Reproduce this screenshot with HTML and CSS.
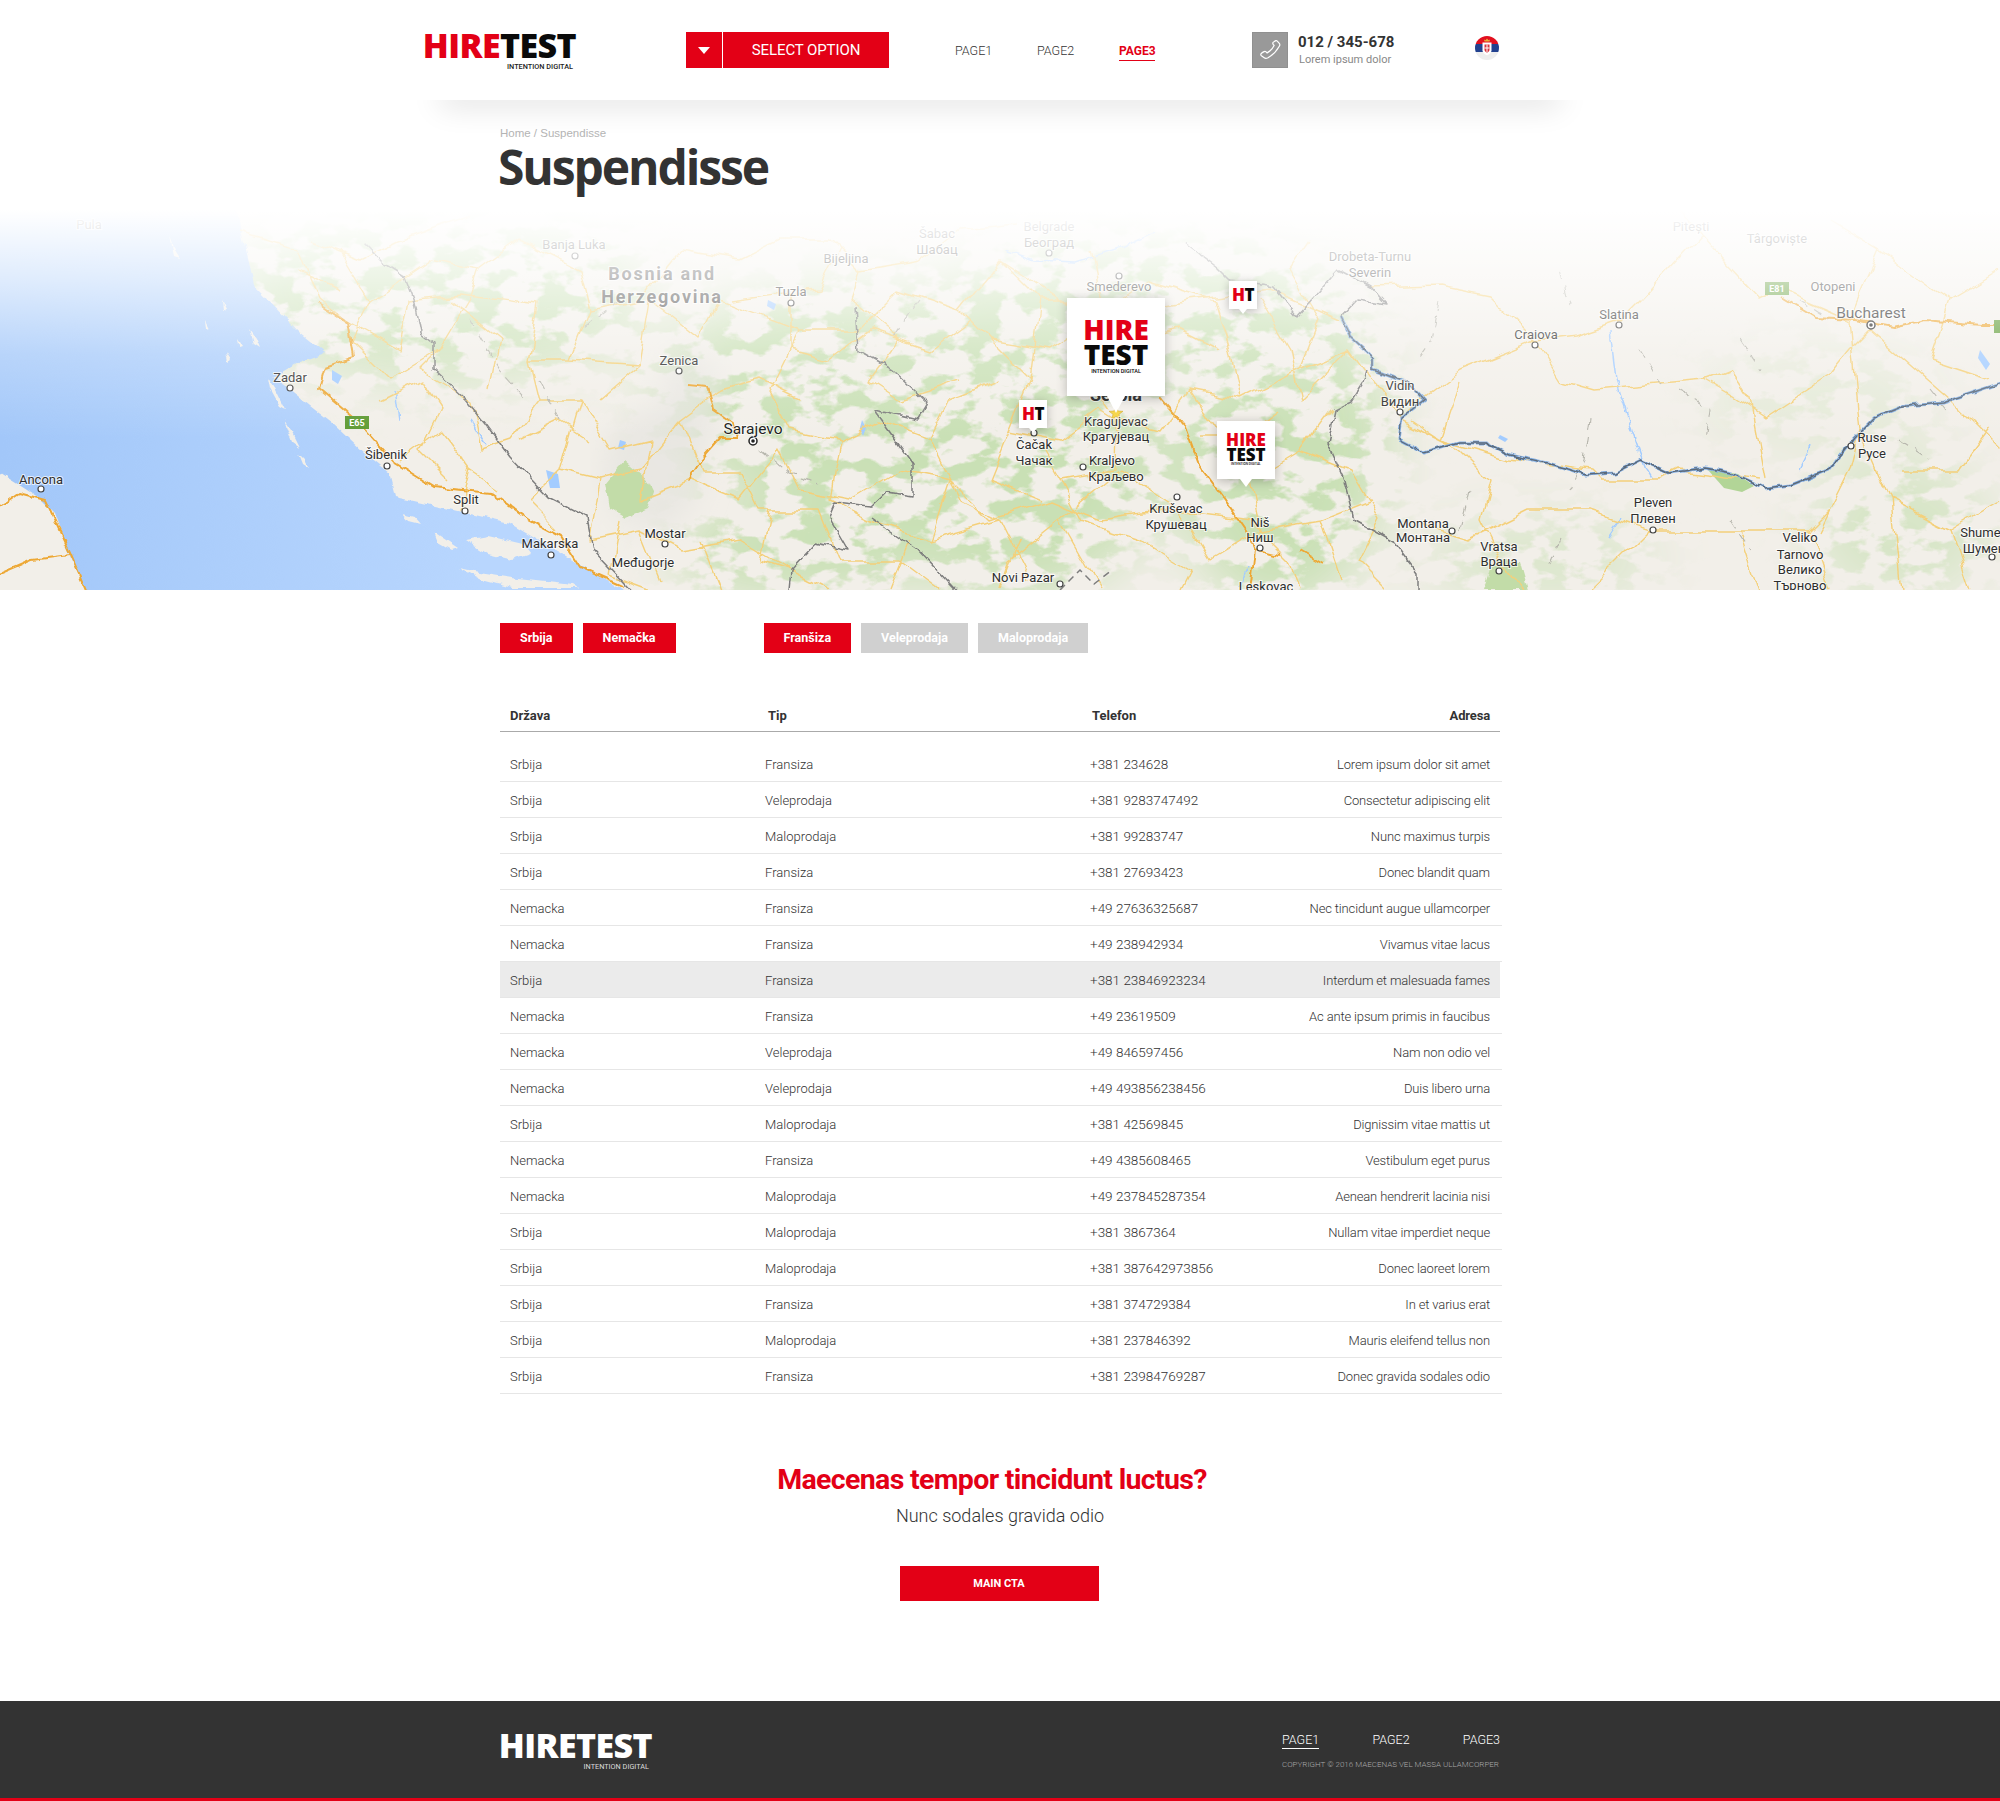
FILE: index.html
```html
<!DOCTYPE html>
<html lang="sr">
<head>
  <meta charset="UTF-8" />
  <title>Suspendisse</title>
  <link rel="stylesheet" href="styles.css">
</head>
<body>

  <!-- HEADER -->
  <header class="header">
    <a class="logo" href="#">
      <span class="logo-word"><span class="red">HIRE</span>TEST</span>
      <span class="logo-sub">INTENTION DIGITAL</span>
    </a>
    <div class="select">
      <span class="select-arrow"></span>
      <span class="select-label">SELECT OPTION</span>
    </div>
    <nav class="nav">
      <a href="#">PAGE1</a>
      <a href="#">PAGE2</a>
      <a href="#" class="active">PAGE3</a>
    </nav>
    <div class="phone">
      <span class="phone-icon">
        <svg width="36" height="36" viewBox="0 0 36 36"><path d="M22.5 9.500c1-1 2-1.200 2.800-.4l2 2.200c.7.800.7 1.800 0 2.900-2.700 4.700-6.500 8.900-11.300 11.500-1.400.7-2.800.8-3.800.1l-2.800-2c-.9-.7-.8-1.700.1-2.500.9-.8 1.800-1.300 2.600-1.700.8-.3 1.500-.2 2 .3l1 1c3-1.600 5.500-4.400 7-7.500l-.9-1c-.5-.6-.5-1.300-.1-2 .3-.3.7-.6 1.400-.9z" fill="none" stroke="#fff" stroke-width="1.200"/></svg>
      </span>
      <div class="phone-text">
        <strong>012 / 345-678</strong>
        <span>Lorem ipsum dolor</span>
      </div>
    </div>
    <svg class="flag" width="24" height="24" viewBox="0 0 24 24">
      <defs><clipPath id="flagClip"><circle cx="12" cy="12" r="12"/></clipPath></defs>
      <g clip-path="url(#flagClip)">
        <rect width="24" height="8" fill="#e2101f"/>
        <rect y="8" width="24" height="8" fill="#21418f"/>
        <rect y="16" width="24" height="8" fill="#eeeeee"/>
        <path d="M9.500 5.500l-.5-2 1.500.8L12 2.500l1.500 1.800 1.500-.8-.5 2z" fill="#e5b23a"/>
        <path d="M7.500 6.500h9v8c0 2.400-2.200 3.700-4.500 4.800-2.300-1.100-4.500-2.400-4.500-4.800z" fill="#fff"/>
        <path d="M9.500 8.500h5v5.500c0 1.200-1.300 2-2.500 2.700-1.200-.7-2.500-1.500-2.500-2.700z" fill="#d8323c"/>
        <path d="M11.500 8.500h1v8h-1zM9.500 11.500h5v1h-5z" fill="#fff"/>
      </g>
    </svg>
  </header>

  <!-- TITLE -->
  <section class="page-title">
    <div class="crumbs">Home / Suspendisse</div>
    <h1>Suspendisse</h1>
  </section>

  <!-- MAP -->
  <section class="map">
    <svg class="map-svg" width="2000" height="380" viewBox="0 210 2000 380">
      <defs>
        <linearGradient id="sea" gradientUnits="userSpaceOnUse" x1="0" x2="600" y1="0" y2="0">
          <stop offset="0" stop-color="#a2c7f9"/>
          <stop offset=".8" stop-color="#b8d6fe"/>
        </linearGradient>
        <linearGradient id="fade" x1="0" x2="0" y1="0" y2="1">
          <stop offset="0" stop-color="#fff" stop-opacity="1"/>
          <stop offset=".18" stop-color="#fff" stop-opacity=".66"/>
          <stop offset=".38" stop-color="#fff" stop-opacity=".24"/>
          <stop offset=".6" stop-color="#fff" stop-opacity="0"/>
        </linearGradient>
        <filter id="mottle" x="0" y="0" width="100%" height="100%" color-interpolation-filters="sRGB">
          <feTurbulence type="fractalNoise" baseFrequency=".03 .048" numOctaves="4" seed="11"/>
          <feColorMatrix values="0 0 0 0 .79  0 0 0 0 .88  0 0 0 0 .71  9 0 0 0 -4.300"/>
          <feGaussianBlur stdDeviation=".5"/>
        </filter>
        <filter id="wiggle" filterUnits="userSpaceOnUse" x="-40" y="170" width="2080" height="460" color-interpolation-filters="sRGB">
          <feTurbulence type="fractalNoise" baseFrequency=".035" numOctaves="2" seed="4" result="n"/>
          <feDisplacementMap in="SourceGraphic" in2="n" scale="14" xChannelSelector="R" yChannelSelector="G"/>
        </filter>
        <filter id="shiver" filterUnits="userSpaceOnUse" x="-40" y="170" width="2080" height="460" color-interpolation-filters="sRGB">
          <feTurbulence type="fractalNoise" baseFrequency=".09" numOctaves="2" seed="7" result="n"/>
          <feDisplacementMap in="SourceGraphic" in2="n" scale="7" xChannelSelector="R" yChannelSelector="G"/>
        </filter>
        <filter id="soft"><feGaussianBlur stdDeviation="28"/></filter>
        <filter id="soft2"><feGaussianBlur stdDeviation="14"/></filter>
        <mask id="greenMask" maskUnits="userSpaceOnUse" x="0" y="210" width="2000" height="380">
          <g filter="url(#soft)" fill="#fff">
            <ellipse cx="440" cy="290" rx="210" ry="90"/>
            <ellipse cx="840" cy="390" rx="190" ry="110"/>
            <ellipse cx="800" cy="550" rx="130" ry="50"/>
            <ellipse cx="1010" cy="470" rx="150" ry="130"/>
            <ellipse cx="1280" cy="440" rx="110" ry="170"/>
            <ellipse cx="1130" cy="300" rx="200" ry="70"/>
            <ellipse cx="1900" cy="530" rx="90" ry="70" fill="#aaa"/>
            <ellipse cx="1540" cy="560" rx="120" ry="40" fill="#999"/>
            <ellipse cx="1820" cy="400" rx="120" ry="50" fill="#555"/>
          </g>
        </mask>
      </defs>

      <!-- land and green -->
      <rect x="0" y="210" width="2000" height="380" fill="#f2efe9"/>
      <rect x="0" y="210" width="2000" height="380" filter="url(#mottle)" mask="url(#greenMask)"/>
      <g filter="url(#soft2)">
        <ellipse cx="652" cy="470" rx="50" ry="60" fill="#e6e4e0" opacity=".7"/>
        <ellipse cx="690" cy="400" rx="30" ry="50" fill="#e6e4e0" opacity=".7"/>
      </g>
      <path d="M606 483l18-22 24 20 6 12-6 16-22 10-16-10z" fill="#c2dca8" filter="url(#shiver)"/>
      <path d="M1708 470l30 4 16 12-12 6-18-4z" fill="#b2d597"/>
      <path d="M1494 560l26 2 8 28h-44z" fill="#c2dca8" filter="url(#shiver)"/>

      <!-- sea -->
      <g filter="url(#shiver)">
        <path fill="url(#sea)" d="M-30 180H230L236 210 255 287 300 333 325 353 300 362 274 377 290 390 332 423 364 453 389 473 395 497 453 510 510 523 561 553 600 577 625 590 640 620H100L86 590 70 557 54 513 38 497 16 483 0 473-30 460Z"/>
        <g fill="#f2efe9">
          <path d="M466 540l22-4 34 8 8 10-18 6-24-6z"/>
          <path d="M459 568l20 4 40 6 54 6 6 4H512l-30-8z"/>
          <path d="M434 532l12 8 12 8-6 2-14-8z"/>
          <path d="M402 514l12 3 6 7-12-3z"/>
          <path d="M250 330l6 8 4 10-6-4zM268 378l8 12 10 20-6-3-10-18zM284 420l8 12 8 16-8-6zM298 455l6 6 4 8-6-4zM226 352l5 8-3 2zM205 320l4 8-3 1z"/>
          <path d="M170 236l5 14 5 8-6-2zM222 300l4 8-3 2zM238 340l4 6-3 1z"/>
        </g>
      </g>

      <!-- water -->
      <g fill="none" stroke="#a3ccff" stroke-width="1.500" filter="url(#shiver)">
        <path d="M1005 250l30 10 40 2 50-16 30-14"/>
        <path d="M1125 300l16 30 14 40"/>
        <path d="M1610 330l6 50 16 50 14 40 6 10"/>
        <path d="M1800 470l6-12 4-14"/>
        <path d="M395 390l4 30M470 420l16 26M1240 585l10-20M1620 520l-12 18"/>
      </g>
      <g fill="#a3ccff">
        <path d="M546 470l12 4 2 14-10 0z"/>
        <path d="M332 370l10 6-4 8-6-4z"/>
        <path d="M620 440l6 2-2 8-6-2z"/>
        <path d="M1980 350l10 14-4 6-8-12z"/>
        <path d="M768 300l8 4-2 6-7-4zM862 420l4 8-3 8-3-8zM1500 435l8 4-3 3-7-4z"/>
      </g>

      <!-- minor roads -->
      <path filter="url(#wiggle)" fill="none" stroke="#f4d07a" stroke-width="1.400" stroke-linejoin="round" d="
        M242 232L300 250 320 300 345 320 400 350 410 300 460 295 540 305 530 360 570 360 640 365 650 300 700 340 720 300 800 330 860 330 900 290 960 310 1000 260 1060 300 1130 310 1190 300 1270 290 1340 320
        M310 240L360 260 400 240 470 215M470 300L440 350 420 370 470 400 480 450 510 440 540 400 530 360M540 400L580 400 610 450 650 440 640 500 690 480 740 500 780 450 800 490 850 500 900 470 950 480 990 520 1050 500 1100 520 1170 510 1250 520
        M580 400L560 470 600 480 590 540 640 530 680 550 740 540 790 570 830 590M640 530L660 580M400 460L440 430 470 470 500 490M470 470L460 510M640 365L600 400
        M730 300L790 292 790 350 830 360 870 330 930 350 970 320 1030 380 1010 430 1060 440 1100 410 1116 420 1115 470 1060 480 1040 445
        M800 330L770 390 790 430 840 440 880 420 930 440 950 400 1000 380M840 440L830 500 870 520 930 540 1000 520 1030 580M930 440L960 500 1000 520
        M1116 420L1160 430 1190 390 1240 400 1300 370 1350 350 1400 420M1240 400L1230 350 1215 300 1150 280 1120 300M1190 390L1250 480 1300 450 1330 410M1250 480L1260 530 1320 520 1340 580M1180 510L1120 470 1060 520 1100 590M1180 510L1210 560 1260 530
        M1000 260L1040 300 1030 380M1090 250L1100 300 1130 310 1150 370M1260 300L1290 350 1300 400 1350 350
        M340 250L370 300 350 340 390 380 440 350M370 300L430 260 480 270 520 240 580 270 590 310 640 300 680 250 740 260M590 310L570 360M480 270L470 300
        M380 400L420 380 440 410 420 450 450 480M520 440L560 420 590 440M560 470L530 500 560 530M600 480L640 470 680 420 720 390 760 380 800 400M680 420L700 470 740 470 760 510 820 510 840 560 900 560 940 590
        M740 260L780 240 830 240 860 270 850 300 900 340 870 380 900 400 960 380M860 270L920 260 960 230 1020 225M960 310L990 340 1050 350 1080 330 1140 340 1180 330 1220 350
        M1040 300L1090 300 1120 340 1090 380 1110 410M1010 430L990 480 1040 500M1060 480L1080 520 1140 540 1190 570 1180 590M1060 520L1010 560 1000 590M890 590L910 540M950 480L930 540
        M1300 370L1320 320 1290 270 1310 240M1300 450L1350 470 1380 520 1360 560 1390 590M1320 520L1370 500M1250 520L1290 560 1300 590M1200 440L1240 440 1280 410
        M770 510L760 560 790 570M700 540L720 590M620 520L610 575 650 590M450 300L500 340 490 390M300 270L340 290M840 250L820 290 790 292
        M1370 287L1440 285 1490 295 1535 340 1575 335 1620 320 1640 300M1535 340L1560 380 1595 390 1650 385 1705 380 1730 395 1765 418 1830 375 1850 350 1870 330M1705 380L1730 370 1750 400 1765 480M1535 340L1460 370 1420 400 1400 420
        M1400 420L1460 450 1490 480 1480 520 1500 560 1520 590M1410 420L1440 440 1510 460 1590 470 1600 480 1660 480 1680 470 1760 480M1420 525L1470 540 1530 510 1590 510 1650 530 1730 530 1810 530 1830 510M1650 530L1620 560 1590 590M1810 530L1830 590M1860 430L1850 470 1820 530M1860 430L1890 500 1950 530 2000 500M1950 530L1970 590
        M1640 300L1700 235 1760 300 1780 290 1850 320M1700 235L1680 210M1850 320L1880 250 1950 300 2000 270M1850 320L1860 430M1870 330L1950 400 2000 450M1000 590L1020 540
        M1900 470L1960 470 1990 430M1890 500L1900 590M1740 530L1760 590M1440 440L1460 380M1950 300L1930 360 1990 380M1880 250L1830 220"/>

      <!-- unpaved grey tracks -->
      <path filter="url(#shiver)" fill="none" stroke="#b7b6ad" stroke-width="1.100" stroke-dasharray="10 7" d="
        M470 320l30 50 26 30M540 380l20 40M620 300l-40 30M760 450l30 24 30 10M920 300l-30 40
        M1440 300l-8 40 -14 20M1560 270l10 36M1590 420l-6 40 -14 30M1470 490l-10 40M1680 390l30 20 -4 30M1740 340l20 30M1730 520l20 30M1560 540l-12 30M1640 350l20 34M1800 300l30 20M1930 390l16 20M1900 440l30 20"/>

      <!-- motorways -->
      <g fill="none" stroke="#eda835" stroke-width="2" stroke-linejoin="round" filter="url(#shiver)">
        <path d="M319 303L348 323 354 357 325 367 319 388 357 420 395 463 434 487 491 493 529 520 561 537 580 567 625 587"/>
        <path d="M689 385L708 387 714 410 733 423 737 437 721 437 701 460 689 480"/>
        <path d="M-10 513L19 493 45 500 70 553 90 600M-10 578L32 560 70 555"/>
        <path d="M1159 397L1185 427 1198 463 1223 497 1246 530 1255 550 1249 600"/>
        <path d="M1255 550l24 6M1300 550l24 14"/>
        <path d="M1781 297L1816 318 1855 320 1893 327 1925 320 1982 325 2010 325"/>
      </g>

      <!-- borders and danube -->
      <g fill="none" stroke="#7d7d7d" stroke-width="1.500" stroke-linejoin="round" filter="url(#shiver)">
        <path d="M364 243L383 263 405 277 415 303 421 333 434 343 434 370 466 400 485 423 510 457 548 497 587 517 593 550 640 600"/>
        <path d="M855 307L858 350 893 370 928 403 918 420 874 410 912 463 912 497 886 493 871 507 835 503 829 517 848 550 816 543 791 570 788 600M871 517L918 550 965 600"/>
        <path d="M1185 243L1217 267 1230 280 1274 287 1297 316 1338 270 1370 287 1386 305 1357 300 1341 317"/>
        <path d="M1367 370L1363 383 1351 402 1335 410 1328 443 1344 480 1354 520 1395 543 1418 573 1418 600"/>
      </g>
      <path fill="none" stroke="#7d7d7d" stroke-width="1.500" stroke-dasharray="7 5" d="M1060 590l20-20 14 14 18-14"/>
      <g fill="none" stroke-linejoin="round" filter="url(#shiver)">
        <path stroke="#86b2e8" stroke-width="3" d="M1341 317L1351 337 1373 357 1373 370 1408 383 1424 400 1402 417 1399 440 1424 453 1459 443 1485 443 1510 455 1548 463 1587 475 1615 473 1641 460 1670 473 1705 468 1733 473 1765 488 1791 485 1829 470 1855 437 1874 418 1906 405 1944 402 2010 380"/>
        <path stroke="#5d6a78" stroke-width="1.400" d="M1341 317L1351 337 1373 357 1373 370 1408 383 1424 400 1402 417 1399 440 1424 453 1459 443 1485 443 1510 455 1548 463 1587 475 1615 473 1641 460 1670 473 1705 468 1733 473 1765 488 1791 485 1829 470 1855 437 1874 418 1906 405 1944 402 2010 380"/>
      </g>

      <!-- road badges -->
      <rect x="345" y="416" width="24" height="13" fill="#5e9b33"/>
      <text class="badge" x="357" y="426">E65</text>
      <rect x="1765" y="282" width="24" height="13" fill="#5e9b33"/>
      <text class="badge" x="1777" y="292">E81</text>
      <rect x="1994" y="320" width="10" height="13" fill="#5e9b33"/>

      <!-- city dots -->
      <g fill="#fff" stroke="#444" stroke-width="1.200">
        <circle cx="290" cy="388" r="3"/><circle cx="387" cy="466" r="3"/><circle cx="465" cy="511" r="3"/>
        <circle cx="551" cy="555" r="3"/><circle cx="665" cy="544" r="3"/><circle cx="41" cy="489" r="3"/>
        <circle cx="679" cy="371" r="3"/><circle cx="791" cy="303" r="3"/><circle cx="575" cy="256" r="3"/>
        <circle cx="1049" cy="253" r="3"/><circle cx="1119" cy="276" r="3"/><circle cx="1535" cy="345" r="3"/>
        <circle cx="1619" cy="325" r="3"/><circle cx="1400" cy="412" r="3"/><circle cx="1851" cy="446" r="3"/>
        <circle cx="1653" cy="530" r="3"/><circle cx="1452" cy="531" r="3"/><circle cx="1499" cy="571" r="3"/>
        <circle cx="1034" cy="433" r="3"/><circle cx="1083" cy="467" r="3"/><circle cx="1177" cy="497" r="3"/>
        <circle cx="1260" cy="548" r="3"/><circle cx="1060" cy="584" r="3"/><circle cx="1992" cy="557" r="3"/>
      </g>
      <circle cx="753" cy="441" r="4" fill="#fff" stroke="#222" stroke-width="1.500"/>
      <circle cx="753" cy="441" r="1.800" fill="#222"/>
      <circle cx="1871" cy="325" r="4" fill="#fff" stroke="#222" stroke-width="1.500"/>
      <circle cx="1871" cy="325" r="1.800" fill="#222"/>
      <path d="M1116 406l2 5 5 .3-4 3 1.300 5-4.300-2.800-4.300 2.800 1.300-5-4-3 5-.3z" fill="#f6d33f" stroke="#c49a1c" stroke-width=".5"/>

      <!-- labels -->
      <g class="labels">
        <text x="89" y="229">Pula</text>
        <text x="574" y="249">Banja Luka</text>
        <text class="country" x="662" y="280">Bosnia and</text>
        <text class="country" x="662" y="303">Herzegovina</text>
        <text x="846" y="263">Bijeljina</text>
        <text x="791" y="296">Tuzla</text>
        <text x="937" y="238">Šabac</text>
        <text x="937" y="254">Шабац</text>
        <text x="1049" y="231">Belgrade</text>
        <text x="1049" y="247">Београд</text>
        <text x="1119" y="291">Smederevo</text>
        <text x="1370" y="261">Drobeta-Turnu</text>
        <text x="1370" y="277">Severin</text>
        <text x="1691" y="231">Pitești</text>
        <text x="1777" y="243">Târgoviște</text>
        <text x="1833" y="291">Otopeni</text>
        <text class="big" x="1871" y="318">Bucharest</text>
        <text x="1619" y="319">Slatina</text>
        <text x="1536" y="339">Craiova</text>
        <text x="1400" y="390">Vidin</text>
        <text x="1400" y="406">Видин</text>
        <text x="1872" y="442">Ruse</text>
        <text x="1872" y="458">Русе</text>
        <text x="290" y="382">Zadar</text>
        <text x="679" y="365">Zenica</text>
        <text class="big" x="753" y="434">Sarajevo</text>
        <text x="386" y="459">Šibenik</text>
        <text x="466" y="504">Split</text>
        <text x="550" y="548">Makarska</text>
        <text x="665" y="538">Mostar</text>
        <text x="643" y="567">Međugorje</text>
        <text x="41" y="484">Ancona</text>
        <text class="region" x="1116" y="401">Serbia</text>
        <text x="1116" y="426">Kragujevac</text>
        <text x="1116" y="441">Крагујевац</text>
        <text x="1034" y="449">Čačak</text>
        <text x="1034" y="465">Чачак</text>
        <text x="1112" y="465">Kraljevo</text>
        <text x="1116" y="481">Краљево</text>
        <text x="1176" y="513">Kruševac</text>
        <text x="1176" y="529">Крушевац</text>
        <text x="1260" y="527">Niš</text>
        <text x="1260" y="542">Ниш</text>
        <text x="1023" y="582">Novi Pazar</text>
        <text x="1266" y="591">Leskovac</text>
        <text x="1423" y="528">Montana</text>
        <text x="1423" y="542">Монтана</text>
        <text x="1499" y="551">Vratsa</text>
        <text x="1499" y="566">Враца</text>
        <text x="1653" y="507">Pleven</text>
        <text x="1653" y="523">Плевен</text>
        <text x="1800" y="542">Veliko</text>
        <text x="1800" y="559">Tarnovo</text>
        <text x="1800" y="574">Велико</text>
        <text x="1800" y="590">Търново</text>
        <text x="1984" y="537">Shumen</text>
        <text x="1984" y="553">Шумен</text>
      </g>

      <rect x="0" y="210" width="2000" height="380" fill="url(#fade)"/>
    </svg>

    <!-- pins -->
    <div class="pin pin-lg">
      <span class="pin-hire">HIRE</span>
      <span class="pin-test">TEST</span>
      <span class="pin-sub">INTENTION DIGITAL</span>
    </div>
    <div class="pin pin-md">
      <span class="pin-hire">HIRE</span>
      <span class="pin-test">TEST</span>
      <span class="pin-sub">INTENTION DIGITAL</span>
    </div>
    <div class="pin pin-sm pin-a"><span class="red">H</span>T</div>
    <div class="pin pin-sm pin-b"><span class="red">H</span>T</div>
  </section>

  <!-- FILTERS -->
  <div class="filters">
    <div class="filter-group">
      <a class="btn" href="#">Srbija</a>
      <a class="btn" href="#">Nemačka</a>
    </div>
    <div class="filter-group">
      <a class="btn" href="#">Franšiza</a>
      <a class="btn btn-off" href="#">Veleprodaja</a>
      <a class="btn btn-off" href="#">Maloprodaja</a>
    </div>
  </div>

  <!-- TABLE -->
  <section class="locations">
    <div class="row row-head">
      <span>Država</span><span>Tip</span><span>Telefon</span><span>Adresa</span>
    </div>
    <div class="row"><span>Srbija</span><span>Fransiza</span><span>+381 234628</span><span>Lorem ipsum dolor sit amet</span></div>
    <div class="row"><span>Srbija</span><span>Veleprodaja</span><span>+381 9283747492</span><span>Consectetur adipiscing elit</span></div>
    <div class="row"><span>Srbija</span><span>Maloprodaja</span><span>+381 99283747</span><span>Nunc maximus turpis</span></div>
    <div class="row"><span>Srbija</span><span>Fransiza</span><span>+381 27693423</span><span>Donec blandit quam</span></div>
    <div class="row"><span>Nemacka</span><span>Fransiza</span><span>+49 27636325687</span><span>Nec tincidunt augue ullamcorper</span></div>
    <div class="row"><span>Nemacka</span><span>Fransiza</span><span>+49 238942934</span><span>Vivamus vitae lacus</span></div>
    <div class="row row-hover"><span>Srbija</span><span>Fransiza</span><span>+381 23846923234</span><span>Interdum et malesuada fames</span></div>
    <div class="row"><span>Nemacka</span><span>Fransiza</span><span>+49 23619509</span><span>Ac ante ipsum primis in faucibus</span></div>
    <div class="row"><span>Nemacka</span><span>Veleprodaja</span><span>+49 846597456</span><span>Nam non odio vel</span></div>
    <div class="row"><span>Nemacka</span><span>Veleprodaja</span><span>+49 493856238456</span><span>Duis libero urna</span></div>
    <div class="row"><span>Srbija</span><span>Maloprodaja</span><span>+381 42569845</span><span>Dignissim vitae mattis ut</span></div>
    <div class="row"><span>Nemacka</span><span>Fransiza</span><span>+49 4385608465</span><span>Vestibulum eget purus</span></div>
    <div class="row"><span>Nemacka</span><span>Maloprodaja</span><span>+49 237845287354</span><span>Aenean hendrerit lacinia nisi</span></div>
    <div class="row"><span>Srbija</span><span>Maloprodaja</span><span>+381 3867364</span><span>Nullam vitae imperdiet neque</span></div>
    <div class="row"><span>Srbija</span><span>Maloprodaja</span><span>+381 387642973856</span><span>Donec laoreet lorem</span></div>
    <div class="row"><span>Srbija</span><span>Fransiza</span><span>+381 374729384</span><span>In et varius erat</span></div>
    <div class="row"><span>Srbija</span><span>Maloprodaja</span><span>+381 237846392</span><span>Mauris eleifend tellus non</span></div>
    <div class="row"><span>Srbija</span><span>Fransiza</span><span>+381 23984769287</span><span>Donec gravida sodales odio</span></div>
  </section>

  <!-- CTA -->
  <section class="cta">
    <h2>Maecenas tempor tincidunt luctus?</h2>
    <p>Nunc sodales gravida odio</p>
    <a class="cta-btn" href="#">MAIN CTA</a>
  </section>

  <!-- FOOTER -->
  <footer class="footer">
    <div class="footer-inner">
      <a class="logo logo-footer" href="#">
        <span class="logo-word">HIRETEST</span>
        <span class="logo-sub">INTENTION DIGITAL</span>
      </a>
      <div class="footer-right">
        <nav class="footer-nav">
          <a href="#" class="active">PAGE1</a>
          <a href="#">PAGE2</a>
          <a href="#">PAGE3</a>
        </nav>
        <div class="copyright">COPYRIGHT © 2016 MAECENAS VEL MASSA ULLAMCORPER</div>
      </div>
    </div>
  </footer>

</body>
</html>
```

FILE: styles.css
```css
* {
  box-sizing: border-box;
}

body {
  margin: 0;
  background-color: white;
  font-family: Roboto, sans-serif;
  color: #333;
}

a {
  color: inherit;
  text-decoration: none;
}

.red {
  color: #e30016;
}

/* header */
.header {
  display: flex;
  align-items: flex-start;
  width: 1200px;
  height: 100px;
  margin: 0 auto;
  padding: 32px 0 0 24px;
  background-color: white;
  box-shadow: 0 46px 30px -40px rgba(0,0,0,0.13);
  position: relative;
  z-index: 2;
}

.logo {
  display: flex;
  flex-direction: column;
  align-items: flex-end;
  width: 152px;
}

.logo-word {
  font-family: "Open Sans", sans-serif;
  font-weight: 800;
  font-size: 34px;
  line-height: 26px;
  letter-spacing: -0.6px;
  color: #0a0a0a;
  white-space: nowrap;
}

.logo-sub {
  font-family: Roboto, sans-serif;
  font-weight: 500;
  font-size: 7.300px;
  line-height: 9px;
  margin: 4px 3px 0 0;
  color: #222;
  white-space: nowrap;
}

.select {
  display: flex;
  width: 203px;
  height: 36px;
  margin-left: 110px;
  background-color: #e30016;
  color: white;
}

.select-arrow {
  width: 37px;
  border-right: 1px solid white;
  position: relative;
}

.select-arrow::after {
  content: "";
  position: absolute;
  left: 12px;
  top: 15px;
  border-top: 7px solid white;
  border-left: 6.5px solid transparent;
  border-right: 6.5px solid transparent;
}

.select-label {
  flex: 1;
  text-align: center;
  font-size: 15px;
  line-height: 36px;
  letter-spacing: -0.1px;
}

.nav {
  display: flex;
  gap: 46px;
  margin-left: 66px;
  padding-top: 10px;
}

.nav a {
  width: 36px;
  font-size: 12.500px;
  font-weight: 300;
  line-height: 18px;
  color: #333;
  white-space: nowrap;
}

.nav a.active {
  color: #e30016;
  font-weight: 700;
  font-size: 12px;
  border-bottom: 1px solid #e30016;
}

.phone {
  display: flex;
  margin-left: 97px;
}

.phone-icon {
  width: 36px;
  height: 36px;
  background-color: #999;
  border: 1px solid #909090;
}

.phone-icon svg {
  display: block;
  margin: -1px;
}

.phone-text {
  display: flex;
  flex-direction: column;
  margin-left: 10px;
}

.phone-text strong {
  font-size: 15px;
  line-height: 20px;
  color: #333;
}

.phone-text span {
  font-size: 11px;
  line-height: 16px;
  color: #888;
  margin-left: 1px;
}

.flag {
  margin: 4px 0 0 81px;
}

/* title */
.page-title {
  width: 1000px;
  margin: 0 auto;
  padding-top: 26px;
  height: 110px;
  position: relative;
  z-index: 1;
}

.crumbs {
  font-family: "Liberation Sans", Arial, sans-serif;
  font-size: 11.500px;
  line-height: 14px;
  color: #b4b4b4;
}

h1 {
  margin: -1px 0 0 -2px;
  font-family: "Open Sans", sans-serif;
  font-weight: 700;
  font-size: 48px;
  line-height: 56px;
  letter-spacing: -2.100px;
  color: #333;
}

/* map */
.map {
  position: relative;
  height: 380px;
  overflow: hidden;
}

.map-svg {
  display: block;
}

.labels text {
  font-family: Roboto, sans-serif;
  font-size: 13px;
  fill: #2e2e2e;
  text-anchor: middle;
  stroke: #fff;
  stroke-width: 2px;
  stroke-opacity: 0.7;
  paint-order: stroke;
}

.labels .big {
  font-size: 15.500px;
  fill: #1c1c1c;
}

.labels .region {
  font-size: 18px;
  font-weight: 700;
  fill: #222;
}

.labels .country {
  font-size: 18px;
  font-weight: 700;
  letter-spacing: 1.800px;
  fill: #4a4a4a;
}

.badge {
  font-family: Roboto, sans-serif;
  font-size: 9px;
  font-weight: 700;
  fill: white;
  text-anchor: middle;
}

.pin {
  position: absolute;
  background-color: white;
  box-shadow: 0 2px 10px rgba(0,0,0,0.25);
  display: flex;
  flex-direction: column;
  align-items: center;
  font-family: "Open Sans", sans-serif;
  font-weight: 800;
  color: #0a0a0a;
}

.pin::after {
  content: "";
  position: absolute;
  left: 50%;
  top: 100%;
  border-style: solid;
  border-color: white transparent transparent;
}

.pin-sub {
  font-family: Roboto, sans-serif;
  font-weight: 500;
  white-space: nowrap;
}

.pin-lg {
  left: 1067px;
  top: 88px;
  width: 98px;
  height: 98px;
  padding-top: 19px;
}

.pin-lg::after {
  margin-left: -9px;
  border-width: 17px 9px 0;
}

.pin-lg .pin-hire,
.pin-lg .pin-test {
  font-size: 28px;
  line-height: 25px;
}

.pin-lg .pin-sub {
  font-size: 5.500px;
  line-height: 8px;
}

.pin-md {
  left: 1217px;
  top: 211px;
  width: 58px;
  height: 58px;
  padding-top: 11px;
}

.pin-md::after {
  margin-left: -6px;
  border-width: 8px 6px 0;
}

.pin-md .pin-hire,
.pin-md .pin-test {
  font-size: 17px;
  line-height: 15px;
}

.pin-md .pin-sub {
  font-size: 3.300px;
  line-height: 5px;
}

.pin-hire {
  color: #e30016;
}

.pin-sm {
  width: 28px;
  height: 28px;
  font-size: 17px;
  line-height: 28px;
  letter-spacing: -0.5px;
  flex-direction: row;
  justify-content: center;
}

.pin-sm::after {
  margin-left: -4px;
  border-width: 5px 4px 0;
}

.pin-a {
  left: 1019px;
  top: 190px;
}

.pin-b {
  left: 1229px;
  top: 71px;
}

/* filters */
.filters {
  display: flex;
  gap: 88px;
  width: 1000px;
  margin: 33px auto 0;
}

.filter-group {
  display: flex;
  gap: 10px;
}

.btn {
  height: 30px;
  padding: 0 20px;
  background-color: #e30016;
  color: white;
  font-size: 12.500px;
  font-weight: 700;
  line-height: 30px;
}

.btn-off {
  background-color: #d0d0d0;
}

/* table */
.locations {
  width: 1002px;
  margin: 48px auto 0;
  transform: translateX(1px);
}

.row {
  display: grid;
  grid-template-columns: 255px 325px 1fr auto;
  height: 36px;
  padding: 0 12px 0 10px;
  align-items: baseline;
  font-size: 13px;
  font-weight: 300;
  line-height: 36px;
  border-bottom: 1px solid #e6e6e6;
}

.row span:nth-child(3) {
  font-size: 13.500px;
}

.row span:last-child {
  text-align: right;
  letter-spacing: -0.15px;
}

.row-head {
  height: 31px;
  margin-bottom: 14px;
  margin-right: 2px;
  padding-right: 10px;
  border-bottom: 1px solid #aaa;
  font-weight: 700;
  font-size: 13px;
  line-height: 29px;
}

.row-head span:nth-child(2),
.row-head span:nth-child(3) {
  margin-left: 3px;
  font-size: 13px;
}

.row-head span:nth-child(3) {
  margin-left: 2px;
}

.row-hover {
  background-color: #ebebeb;
  margin-right: 2px;
  padding-right: 10px;
}

/* cta */
.cta {
  display: flex;
  flex-direction: column;
  align-items: center;
  padding-top: 67px;
}

.cta h2 {
  margin: 0 16px 0 0;
  font-size: 28.500px;
  font-weight: 700;
  line-height: 38px;
  letter-spacing: -0.65px;
  color: #e30016;
}

.cta p {
  margin: 0;
  font-size: 18px;
  font-weight: 300;
  line-height: 34px;
  color: #333;
}

.cta-btn {
  width: 199px;
  height: 35px;
  margin: 33px 2px 0 0;
  background-color: #e30016;
  color: white;
  font-size: 11px;
  font-weight: 700;
  line-height: 35px;
  text-align: center;
}

/* footer */
.footer {
  height: 100px;
  margin-top: 100px;
  background-color: #333;
  border-bottom: 3px solid #e30016;
}

.footer-inner {
  display: flex;
  justify-content: space-between;
  width: 1000px;
  margin: 0 auto;
  padding-top: 31px;
}

.logo-footer .logo-word {
  color: white;
}

.logo-footer .logo-sub {
  color: #ddd;
  font-weight: 400;
  margin-right: 3px;
}

.footer-right {
  width: 218px;
}

.footer-nav {
  display: flex;
  justify-content: space-between;
}

.footer-nav a {
  font-size: 12.500px;
  font-weight: 300;
  line-height: 16px;
  color: white;
}

.footer-nav a.active {
  border-bottom: 1px solid white;
}

.copyright {
  margin-top: 11px;
  font-size: 8px;
  font-weight: 300;
  color: #aaa;
  white-space: nowrap;
}
```
